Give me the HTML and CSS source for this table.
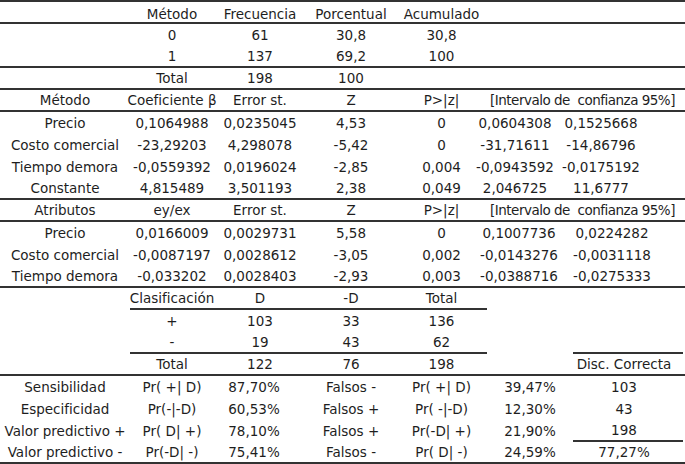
FILE: index.html
```html
<!DOCTYPE html>
<html lang="es">
<head>
<meta charset="utf-8">
<title>Resultados</title>
<link rel="stylesheet" href="styles.css">
</head>
<body>
<div class="sheet">
  <div class="row s1 line first"><div class="c"></div><div class="c">Método</div><div class="c">Frecuencia</div><div class="c">Porcentual</div><div class="c">Acumulado</div></div>
  <div class="row s1"><div class="c"></div><div class="c">0</div><div class="c">61</div><div class="c">30,8</div><div class="c">30,8</div></div>
  <div class="row s1 line"><div class="c"></div><div class="c">1</div><div class="c">137</div><div class="c">69,2</div><div class="c">100</div></div>
  <div class="row s1 line"><div class="c"></div><div class="c">Total</div><div class="c">198</div><div class="c">100</div><div class="c"></div></div>

  <div class="row s2 line"><div class="c">Método</div><div class="c">Coeficiente β</div><div class="c">Error st.</div><div class="c">Z</div><div class="c">P&gt;|z|</div><div class="c ci">[Intervalo de  confianza 95%]</div></div>
  <div class="row s2"><div class="c">Precio</div><div class="c">0,1064988</div><div class="c">0,0235045</div><div class="c">4,53</div><div class="c">0</div><div class="c g">0,0604308</div><div class="c h">0,1525668</div></div>
  <div class="row s2"><div class="c">Costo comercial</div><div class="c">-23,29203</div><div class="c">4,298078</div><div class="c">-5,42</div><div class="c">0</div><div class="c g">-31,71611</div><div class="c h">-14,86796</div></div>
  <div class="row s2"><div class="c">Tiempo demora</div><div class="c">-0,0559392</div><div class="c">0,0196024</div><div class="c">-2,85</div><div class="c">0,004</div><div class="c g">-0,0943592</div><div class="c h">-0,0175192</div></div>
  <div class="row s2 line"><div class="c">Constante</div><div class="c">4,815489</div><div class="c">3,501193</div><div class="c">2,38</div><div class="c">0,049</div><div class="c g">2,046725</div><div class="c h">11,6777</div></div>

  <div class="row s3 line"><div class="c">Atributos</div><div class="c">ey/ex</div><div class="c">Error st.</div><div class="c">Z</div><div class="c">P&gt;|z|</div><div class="c ci">[Intervalo de  confianza 95%]</div></div>
  <div class="row s3"><div class="c">Precio</div><div class="c">0,0166009</div><div class="c">0,0029731</div><div class="c">5,58</div><div class="c">0</div><div class="c g">0,1007736</div><div class="c h">0,0224282</div></div>
  <div class="row s3"><div class="c">Costo comercial</div><div class="c">-0,0087197</div><div class="c">0,0028612</div><div class="c">-3,05</div><div class="c">0,002</div><div class="c g">-0,0143276</div><div class="c h">-0,0031118</div></div>
  <div class="row s3 line"><div class="c">Tiempo demora</div><div class="c">-0,033202</div><div class="c">0,0028403</div><div class="c">-2,93</div><div class="c">0,003</div><div class="c g">-0,0388716</div><div class="c h">-0,0275333</div></div>

  <div class="row s4"><div class="c"></div><div class="c ul">Clasificación</div><div class="c ul">D</div><div class="c ul">-D</div><div class="c ul">Total</div></div>
  <div class="row s4"><div class="c"></div><div class="c">+</div><div class="c">103</div><div class="c">33</div><div class="c">136</div></div>
  <div class="row s4"><div class="c"></div><div class="c ul">-</div><div class="c ul">19</div><div class="c ul">43</div><div class="c ul">62</div><div class="c"></div><div class="c ul"></div></div>
  <div class="row s4 line"><div class="c"></div><div class="c">Total</div><div class="c">122</div><div class="c">76</div><div class="c">198</div><div class="c"></div><div class="c h">Disc. Correcta</div></div>

  <div class="row s5"><div class="c">Sensibilidad</div><div class="c">Pr( +| D)</div><div class="c k">87,70%</div><div class="c">Falsos -</div><div class="c">Pr( +| D)</div><div class="c">39,47%</div><div class="c h">103</div></div>
  <div class="row s5"><div class="c">Especificidad</div><div class="c">Pr(-|-D)</div><div class="c k">60,53%</div><div class="c">Falsos +</div><div class="c">Pr( -|-D)</div><div class="c">12,30%</div><div class="c h">43</div></div>
  <div class="row s5"><div class="c">Valor predictivo +</div><div class="c">Pr( D| +)</div><div class="c k">78,10%</div><div class="c">Falsos +</div><div class="c">Pr(-D| +)</div><div class="c">21,90%</div><div class="c h ul">198</div></div>
  <div class="row s5 line"><div class="c">Valor predictivo -</div><div class="c">Pr(-D| -)</div><div class="c k">75,41%</div><div class="c">Falsos -</div><div class="c">Pr( D| -)</div><div class="c">24,59%</div><div class="c h">77,27%</div></div>
</div>
</body>
</html>
```

FILE: styles.css
```css
html, body {
  margin: 0;
  padding: 0;
  background: #ffffff;
}

.sheet {
  width: 685px;
  border-top: 2px solid #333333;
  font-family: "DejaVu Sans", "Liberation Sans", sans-serif;
  font-size: 13.5px;
  color: #1e1e1e;
}

.row {
  display: grid;
  grid-template-columns: 130px 84px 92px 90px 91px 86px 110px 2px;
  height: 22px;
  box-sizing: border-box;
}

.line {
  border-bottom: 2px solid #333333;
}

.first .c {
  padding-top: 3px;
}

.c {
  display: flex;
  align-items: center;
  justify-content: center;
  white-space: pre;
  min-width: 0;
}

.ul {
  border-bottom: 2px solid #333333;
}

.ci {
  grid-column: span 3;
  justify-content: flex-start;
  padding-left: 3px;
  letter-spacing: -0.5px;
}

.s2 .g { padding-right: 30px; }
.s2 .h { padding-right: 54px; }
.s3 .g { padding-right: 22px; }
.s3 .h { padding-right: 32px; }
.s4 .h, .s5 .h { padding-right: 8px; }
.s5 .k { padding-right: 12px; }
```
